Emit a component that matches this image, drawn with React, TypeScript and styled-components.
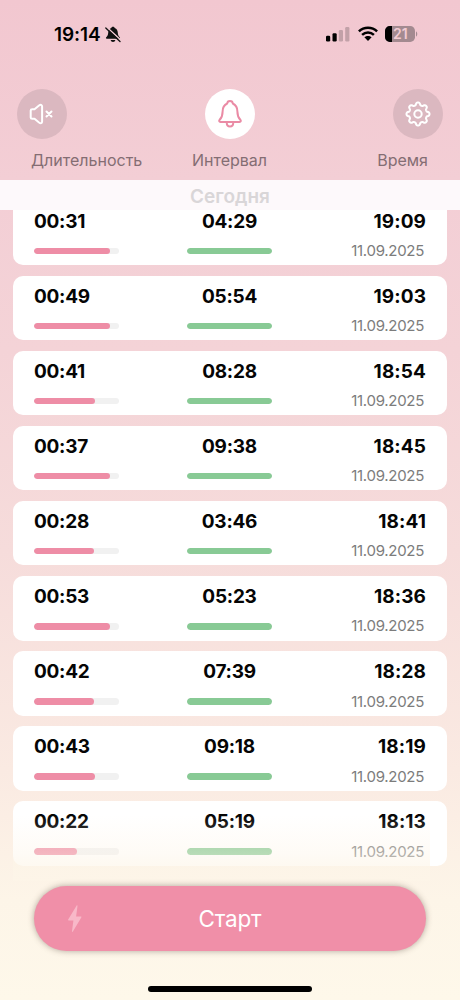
import React from "react";
import styled, { createGlobalStyle } from "styled-components";

const Global = createGlobalStyle`
  * { box-sizing: border-box; }
  body { margin: 0; font-family: Inter, "Liberation Sans", sans-serif; }
`;

const Screen = styled.main`
  position: relative;
  display: flex;
  flex-direction: column;
  width: 460px;
  height: 1000px;
  overflow: hidden;
  background: linear-gradient(180deg, #f2c7d0 0%, #f3ced5 18%, #f4d3d7 35%, #f6dcdb 55%, #faeae2 77%, #fdf5e8 90%, #fef8ea 100%);
`;

const StatusBar = styled.header`
  display: flex;
  align-items: center;
  justify-content: space-between;
  height: 68px;
  padding: 0 42px 0 54px;
`;

const StatusGroup = styled.div<{ $gap: number }>`
  display: flex;
  align-items: center;
  gap: ${(p) => p.$gap}px;
`;

const Clock = styled.span`
  width: 47px;
  padding-top: 1px;
  font-size: 19px;
  font-weight: 600;
  letter-spacing: -0.1px;
  line-height: 22px;
  white-space: nowrap;
`;

const Toolbar = styled.nav`
  display: flex;
  justify-content: space-between;
  padding: 21px 17px 0;
`;

const RoundButton = styled.button<{ $active?: boolean }>`
  display: flex;
  align-items: center;
  justify-content: center;
  width: 50px;
  height: 50px;
  padding: 0;
  border: 0;
  border-radius: 50%;
  color: ${(p) => (p.$active ? "#ea8ba5" : "#fff")};
  background: ${(p) => (p.$active ? "#fff" : "#dbb8c0")};
`;

const Columns = styled.div`
  display: grid;
  grid-template-columns: 1fr 1fr 1fr;
  height: 41px;
  padding: 10px 32px 0 31px;
  color: #846d73;
  font-size: 16px;
  line-height: 22px;
`;

const Column = styled.span<{ $align: string }>`
  text-align: ${(p) => p.$align};
  white-space: nowrap;
`;

const SectionTitle = styled.h2`
  flex: none;
  height: 30px;
  margin: 0;
  color: #d9d6d8;
  background: #fdf9fb;
  font-size: 19px;
  font-weight: 600;
  line-height: 33px;
  text-align: center;
`;

const ListArea = styled.section`
  position: relative;
  flex: none;
  height: 671px;
  padding: 0 13px;
  overflow: hidden;
`;

const List = styled.div`
  display: flex;
  flex-direction: column;
  gap: 10.6px;
  margin-top: -9.4px;
`;

const Card = styled.article`
  display: grid;
  grid-template-columns: 153px 85px 1fr;
  flex: none;
  height: 64.5px;
  padding: 8px 21px 0;
  border-radius: 10px;
  background: #fff;
`;

const Cell = styled.div<{ $align: string }>`
  display: flex;
  flex-direction: column;
  align-items: ${(p) => p.$align};
`;

const Value = styled.span<{ $spacing?: number }>`
  height: 24px;
  color: #050505;
  font-size: 19px;
  font-weight: 650;
  letter-spacing: ${(p) => p.$spacing ?? -0.25}px;
  line-height: 26px;
`;

const Track = styled.div`
  width: 85px;
  height: 6.5px;
  margin-top: 15px;
  overflow: hidden;
  border-radius: 4px;
  background: #f1f1f1;
`;

const Fill = styled.div<{ $color: string }>`
  height: 100%;
  border-radius: 4px;
  background: ${(p) => p.$color};
`;

const DateText = styled.span`
  margin-top: 8.4px;
  padding-right: 2px;
  color: #7c7c7c;
  font-size: 15px;
  letter-spacing: -0.3px;
  line-height: 20px;
`;

const Fade = styled.div`
  position: absolute;
  left: 13px;
  right: 30px;
  bottom: 0;
  height: 66px;
  background: linear-gradient(180deg, rgba(253, 245, 232, 0) 0%, rgba(253, 245, 232, 0.4) 58%, rgba(253, 245, 232, 0.9) 100%);
`;

const StartButton = styled.button`
  position: relative;
  flex: none;
  width: 392px;
  height: 65px;
  margin: 5px 34px 0;
  padding: 0;
  border: 0;
  border-radius: 33px;
  color: #fff;
  background: #f08fa8;
  box-shadow: 0 0 6px rgba(70, 55, 45, 0.42);
  font-family: inherit;
  font-size: 22.5px;
  letter-spacing: -0.2px;
`;

const Bolt = styled.svg`
  position: absolute;
  left: 33px;
  top: 19px;
`;

const HomeIndicator = styled.div`
  flex: none;
  width: 164px;
  height: 5.5px;
  margin: 35px auto 0;
  border-radius: 3px;
  background: #000;
`;

const PINK = "#ee8da6";
const GREEN = "#88ca95";

const entries = [
  { duration: "00:31", interval: "04:29", time: "19:09", fill: 75.5 },
  { duration: "00:49", interval: "05:54", time: "19:03", fill: 75.5 },
  { duration: "00:41", interval: "08:28", time: "18:54", fill: 61 },
  { duration: "00:37", interval: "09:38", time: "18:45", fill: 75.5 },
  { duration: "00:28", interval: "03:46", time: "18:41", fill: 60 },
  { duration: "00:53", interval: "05:23", time: "18:36", fill: 75.5 },
  { duration: "00:42", interval: "07:39", time: "18:28", fill: 60 },
  { duration: "00:43", interval: "09:18", time: "18:19", fill: 61 },
  { duration: "00:22", interval: "05:19", time: "18:13", fill: 43 },
];

const MutedBell = () => (
  <svg width="16" height="17" viewBox="0 0 16 17">
    <path d="M8 .7c-.9 0-1.500.5-1.700 1.300C4.200 2.700 3.300 4.400 3.200 6.800 3.100 9.200 2.300 10.300 1.200 11.300c-.5.500-.3 1.500.6 1.500h12.400c.9 0 1.100-1 .6-1.500-1.100-1-1.900-2.100-2-4.500C12.700 4.400 11.800 2.700 9.700 2 9.500 1.200 8.900.7 8 .7z" fill="#111" />
    <path d="M5.600 13.900h4.800c-.3 1.200-1.200 2-2.400 2s-2.100-.8-2.400-2z" fill="#111" />
    <path d="M2.200 1.500 16 14.300" stroke="#f2c9d2" strokeWidth="1.400" />
    <path d="M.8 2 15 15.500" stroke="#111" strokeWidth="1.300" strokeLinecap="round" />
  </svg>
);

const Signal = () => (
  <svg width="24" height="16" viewBox="0 0 24 16">
    <rect x="0" y="9.800" width="4.200" height="5.700" rx="1.200" />
    <rect x="6.500" y="7.300" width="4.200" height="8.200" rx="1.200" />
    <rect x="12.800" y="4" width="4.200" height="11.500" rx="1.200" fill="#c2a1a8" />
    <rect x="19.200" y="1" width="4.200" height="14.500" rx="1.200" fill="#c2a1a8" />
  </svg>
);

const Wifi = () => (
  <svg width="20" height="16" viewBox="0 0 20 16">
    <g fill="none" stroke="#000" strokeWidth="2.500">
      <path d="M.9 5.300C6 .4 14 .4 19.100 5.300" />
      <path d="M4.100 8.900C7.500 5.700 12.500 5.700 15.900 8.900" />
    </g>
    <path d="M6.400 11.300c2.100-1.900 5.100-1.900 7.200 0L10 15z" />
  </svg>
);

const BatteryText = styled.span`
  position: absolute;
  left: 8px;
  top: 0;
  color: #f2cbd3;
  font-size: 14px;
  font-weight: 600;
  line-height: 16px;
`;

const BatteryBox = styled.div`
  position: relative;
  width: 33px;
  height: 16px;
`;

const Battery = () => (
  <BatteryBox>
    <svg width="33" height="16" viewBox="0 0 33 16" display="block">
      <rect width="30" height="16" rx="4.800" fill="#a38a90" />
      <path d="M7 0H4.800A4.800 4.800 0 0 0 0 4.800v6.400A4.800 4.800 0 0 0 4.800 16H7z" fill="#000" />
      <path d="M31 5.500c1.700.5 1.700 4.500 0 5z" fill="#a38a90" />
    </svg>
    <BatteryText>21</BatteryText>
  </BatteryBox>
);

const Speaker = () => (
  <svg width="26" height="24" viewBox="0 0 26 24" fill="none" stroke="currentColor" strokeWidth="2" strokeLinecap="round" strokeLinejoin="round">
    <path d="M3.200 7.200H5.500L10 3.500C11.700 2.200 13.100 2.700 13.100 4.500V19.500C13.100 21.300 11.700 21.800 10 20.500L5.500 16.800H3.200C2.300 16.800 1.700 16.300 1.700 15.400V8.600C1.700 7.700 2.300 7.200 3.200 7.200Z" />
    <path d="m17.500 9.500 5 5m0-5-5 5" />
  </svg>
);

const Bell = () => (
  <svg width="26" height="30" viewBox="0 0 26 30" fill="none" stroke="currentColor" strokeWidth="2" strokeLinecap="round" strokeLinejoin="round">
    <path d="M10.200 4.500C10.300 2.900 11.400 2 13 2s2.700.9 2.800 2.500C19 6 20.400 8.900 20.400 12.400c0 4.200 1 6.300 2.900 8.300.9 1 .6 2.200-.8 2.200H3.500c-1.400 0-1.700-1.200-.8-2.200 1.900-2 2.900-4.100 2.900-8.300 0-3.500 1.400-6.400 4.600-7.900z" />
    <path d="M9.700 23.200c0 2.500 1.300 4.300 3.300 4.300s3.300-1.800 3.300-4.300" />
  </svg>
);

const gearPath = (() => {
  const points: string[] = [];
  for (let i = 0; i <= 160; i++) {
    const a = (i / 160) * Math.PI * 2;
    const r = 10.2 + 1.4 * Math.tanh(1.6 * Math.cos(8 * a));
    points.push(`${(14 + r * Math.sin(a)).toFixed(2)} ${(14 - r * Math.cos(a)).toFixed(2)}`);
  }
  return `M${points.join("L")}Z`;
})();

const Gear = () => (
  <svg width="28" height="28" viewBox="0 0 28 28" fill="none" stroke="currentColor" strokeWidth="2" strokeLinejoin="round">
    <path d={gearPath} />
    <circle cx="14" cy="14" r="3.700" />
  </svg>
);

export default function App() {
  return (
    <Screen>
      <Global />
      <StatusBar>
        <StatusGroup $gap={4}>
          <Clock>19:14</Clock>
          <MutedBell />
        </StatusGroup>
        <StatusGroup $gap={7.5}>
          <Signal />
          <Wifi />
          <Battery />
        </StatusGroup>
      </StatusBar>
      <Toolbar>
        <RoundButton aria-label="Звук"><Speaker /></RoundButton>
        <RoundButton $active aria-label="Напоминания"><Bell /></RoundButton>
        <RoundButton aria-label="Настройки"><Gear /></RoundButton>
      </Toolbar>
      <Columns>
        <Column $align="left">Длительность</Column>
        <Column $align="center">Интервал</Column>
        <Column $align="right">Время</Column>
      </Columns>
      <SectionTitle>Сегодня</SectionTitle>
      <ListArea>
        <List>
          {entries.map((e) => (
            <Card key={e.time}>
              <Cell $align="flex-start">
                <Value>{e.duration}</Value>
                <Track><Fill $color={PINK} style={{ width: e.fill }} /></Track>
              </Cell>
              <Cell $align="center">
                <Value>{e.interval}</Value>
                <Track><Fill $color={GREEN} /></Track>
              </Cell>
              <Cell $align="flex-end">
                <Value $spacing={0.1}>{e.time}</Value>
                <DateText>11.09.2025</DateText>
              </Cell>
            </Card>
          ))}
        </List>
        <Fade />
      </ListArea>
      <StartButton>
        <Bolt width="16" height="28" viewBox="0 0 16 28">
          <path d="M9.500.8 1.200 14.500c-.3.500-.1.900.5.900h4.700L5 26.200c-.1.800.4 1 .9.300l8.400-14c.3-.5.100-.9-.5-.9H9.100L10.500 1.100c.1-.8-.6-1-1-.3z" fill="#f8b8c8" />
        </Bolt>
        Старт
      </StartButton>
      <HomeIndicator />
    </Screen>
  );
}
